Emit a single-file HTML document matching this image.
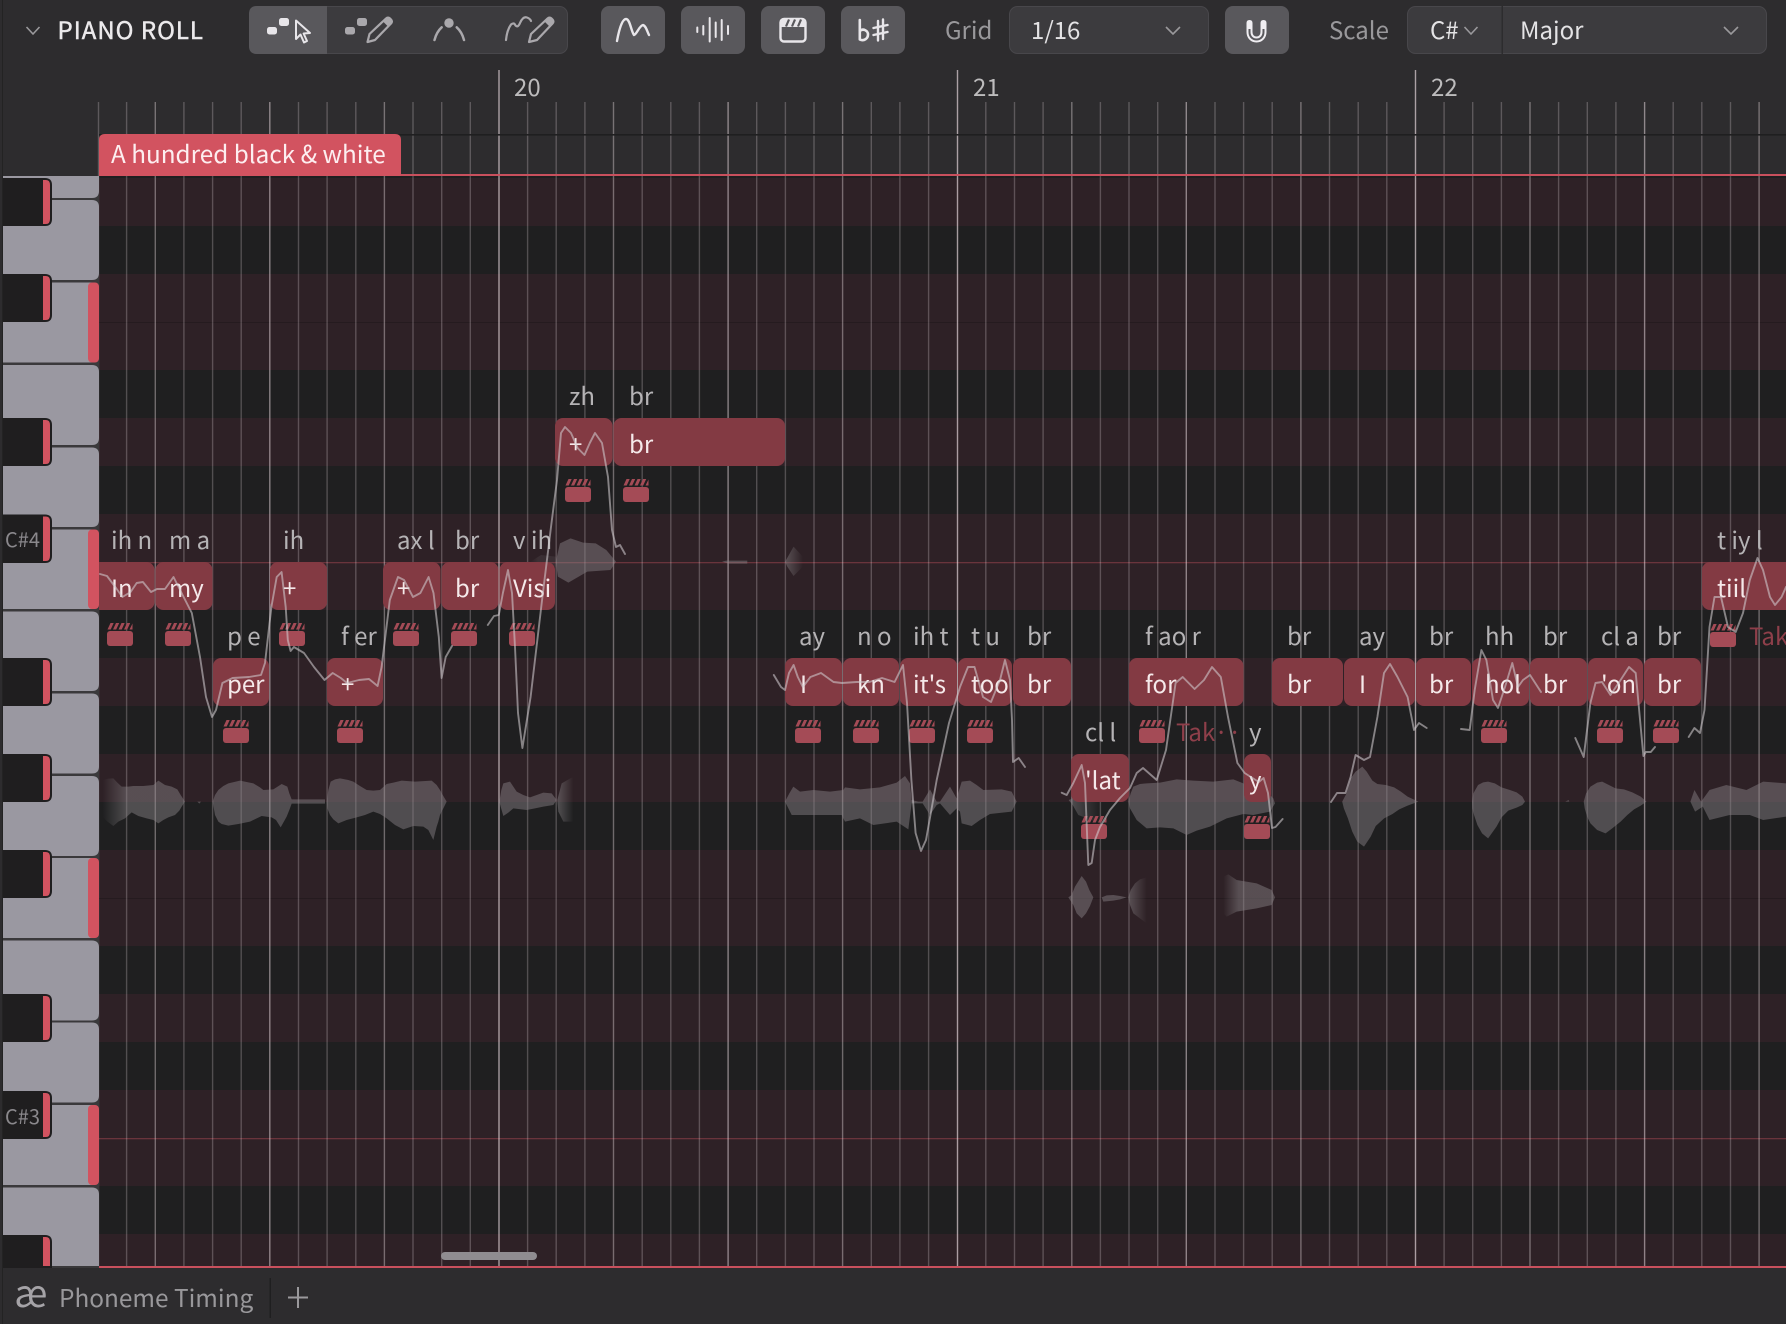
<!DOCTYPE html>
<html lang="en">
<head>
<meta charset="utf-8">
<title>Piano Roll</title>
<style>
html,body{margin:0;padding:0;background:#2d2c2e;width:1786px;height:1324px;overflow:hidden}
svg{display:block;filter:blur(.3px)}
text{font-family:"Noto Sans CJK JP","Liberation Sans",sans-serif;font-size:24px;white-space:pre}
.l{fill:#b5b3b5}
.n{fill:#f5e9ea}
.t{fill:#99989b}
.d{fill:#e4e3e5}
.r{fill:#bdbcbd}
.w{fill:rgba(135,130,133,.47)}
.p{fill:none;stroke:rgba(208,204,206,.58);stroke-width:1.9;stroke-linejoin:round;stroke-linecap:round}
.k{fill:#9a98a1}
.b{fill:#1f1e1f}
.m{fill:#d25360}
.nt{fill:#833a43}
.ic{fill:none;stroke:#aaa8ac;stroke-width:2.2;stroke-linecap:round;stroke-linejoin:round}
.iw{fill:none;stroke:#e8e6ea;stroke-width:2.4;stroke-linecap:round;stroke-linejoin:round}
</style>
</head>
<body>
<svg xmlns="http://www.w3.org/2000/svg" width="1786" height="1324" viewBox="0 0 1786 1324">
<defs>
<g id="c">
<rect x="0" y="8" width="26" height="15" rx="3" fill="#a44b56"/>
<path d="M0.5 6.5 L3.5 0 H6.7 L3.7 6.5Z M6 6.5 L9 0 H12.2 L9.2 6.5Z M11.5 6.5 L14.500 0 H17.7 L14.700 6.5Z M17 6.5 L20 0 H23.2 L20.2 6.5Z M22.5 6.5 L25.500 0.5 V6.5Z" fill="#a44b56"/>
</g>
<linearGradient id="fr" x1="0" x2="1" y1="0" y2="0"><stop offset="0" stop-color="#878285" stop-opacity=".5"/><stop offset="1" stop-color="#878285" stop-opacity="0"/></linearGradient>
<linearGradient id="fl" x1="0" x2="1" y1="0" y2="0"><stop offset="0" stop-color="#878285" stop-opacity="0"/><stop offset=".3" stop-color="#878285" stop-opacity=".47"/><stop offset="1" stop-color="#878285" stop-opacity=".47"/></linearGradient>
<clipPath id="gc"><rect x="99" y="176" width="1687" height="1090"/></clipPath>
</defs>

<!-- base -->
<rect width="1786" height="1324" fill="#2d2c2e"/>
<rect x="2" y="0" width="1" height="1324" fill="#232323"/>

<!-- grid rows -->
<rect x="99" y="176" width="1687" height="1090" fill="#1f1f20"/>
<g fill="#2e2126">
<rect x="99" y="178" width="1687" height="48"/>
<rect x="99" y="274" width="1687" height="96"/>
<rect x="99" y="418" width="1687" height="48"/>
<rect x="99" y="514" width="1687" height="96"/>
<rect x="99" y="658" width="1687" height="48"/>
<rect x="99" y="754" width="1687" height="48"/>
<rect x="99" y="850" width="1687" height="96"/>
<rect x="99" y="994" width="1687" height="48"/>
<rect x="99" y="1090" width="1687" height="96"/>
<rect x="99" y="1234" width="1687" height="32"/>
</g>
<g fill="rgba(0,0,0,.18)">
<rect x="99" y="322" width="1687" height="1"/>
<rect x="99" y="898" width="1687" height="1"/>
</g>
<g fill="rgba(205,85,98,.38)">
<rect x="99" y="562" width="1687" height="1.3"/>
<rect x="99" y="1138" width="1687" height="1.3"/>
</g>

<!-- grid lines -->
<g fill="none" stroke-width="1.4">
<path stroke="rgba(255,240,245,.23)" d="M98.5 102V1266M126.6 102V1266M183.9 102V1266M212.6 102V1266M241.2 102V1266M298.5 102V1266M327.1 102V1266M355.8 102V1266M413 102V1266M441.7 102V1266M470.3 102V1266M527.6 102V1266M556.2 102V1266M584.9 102V1266M642.2 102V1266M670.8 102V1266M699.4 102V1266M756.7 102V1266M785.4 102V1266M814 102V1266M871.3 102V1266M899.9 102V1266M928.6 102V1266M985.8 102V1266M1014.5 102V1266M1043.1 102V1266M1100.4 102V1266M1129 102V1266M1157.7 102V1266M1215 102V1266M1243.6 102V1266M1272.2 102V1266M1329.5 102V1266M1358.2 102V1266M1386.8 102V1266M1444.1 102V1266M1472.7 102V1266M1501.4 102V1266M1558.6 102V1266M1587.3 102V1266M1615.9 102V1266M1673.2 102V1266M1701.8 102V1266M1730.5 102V1266"/>
<path stroke="rgba(255,240,245,.36)" d="M155.3 102V1266M384.4 102V1266M613.5 102V1266M842.6 102V1266M1071.8 102V1266M1300.9 102V1266M1530 102V1266M1759.1 102V1266"/>
<path stroke="rgba(255,240,245,.47)" d="M269.8 102V1266M728.1 102V1266M1186.3 102V1266M1644.6 102V1266"/>
<path stroke="rgba(255,240,245,.6)" d="M499 70V1266M957.5 70V1266M1415.5 70V1266"/>
</g>

<!-- ruler lane -->
<rect x="99" y="134" width="1687" height="1.6" fill="#1f1f20"/>
<text class="r" x="514" y="96">20</text>
<text class="r" x="973" y="96">21</text>
<text class="r" x="1431" y="96">22</text>
<rect x="99" y="174" width="1687" height="2" fill="#c9505d"/>
<path d="M99 176V140q0-6 6-6H395q6 0 6 6V176Z" fill="#d25360"/>
<text x="111" y="163" fill="#fdeef0" style="font-size:24.3px">A hundred black &amp; white</text>

<!-- waveforms -->
<g clip-path="url(#gc)">
<g transform="translate(90 740) scale(.33333)">
<polygon fill="url(#fl)" points="38,120 55,116 70,115 82,128 95,140 115,140 130,138 160,138 190,135 205,122 225,135 245,140 262,148 272,165 285,185 275,200 268,212 255,225 235,232 220,240 205,250 190,240 170,235 145,228 125,217 105,235 85,245 70,258 50,243 38,230"/>
<polygon class="w" points="322,185 333,185 328,191"/>
<polygon class="w" points="368,185 375,165 385,150 400,138 415,130 450,122 490,130 510,142 520,150 550,148 575,132 592,140 598,160 605,178 705,178 705,191 605,191 598,210 590,230 572,262 558,240 545,232 515,228 490,240 480,245 445,252 415,257 395,252 385,245 375,225"/>
<polygon class="w" points="710,185 715,150 722,125 735,118 750,115 775,120 790,125 810,138 830,150 850,152 870,150 890,132 910,128 935,122 975,125 1025,122 1040,135 1050,150 1060,168 1070,185 1060,205 1050,225 1045,245 1040,260 1030,300 1015,270 1000,260 970,258 940,268 915,255 890,235 870,222 850,215 825,225 800,232 770,240 745,250 730,238 720,225 712,205"/>
<polygon class="w" points="1228,185 1234,150 1240,130 1260,125 1270,140 1280,155 1300,165 1320,172 1340,165 1360,158 1385,160 1400,180 1390,195 1360,200 1335,205 1310,210 1270,205 1255,218 1240,228 1232,200"/>
<polygon fill="url(#fr)" points="1402,180 1415,130 1445,113 1450,113 1450,245 1420,245 1405,215"/>
</g>
<g transform="translate(780 740) scale(.33333)">
<polygon class="w" points="15,185 28,160 40,140 60,155 100,150 150,155 190,150 195,142 240,148 300,142 350,128 375,108 390,130 395,180 415,185 428,185 450,148 470,185 480,185 510,140 530,175 545,125 570,122 590,135 610,150 665,148 695,155 710,185 695,215 630,222 600,240 575,258 545,250 540,215 530,205 510,225 480,190 470,195 450,225 428,190 415,190 395,190 385,268 350,245 280,255 240,235 195,245 185,225 130,225 70,225 35,225"/>
<polygon fill="url(#fr)" points="866,180 880,175 960,180 960,250 895,225 878,195"/>
<polygon class="w" points="1045,185 1052,160 1060,140 1080,132 1100,130 1140,128 1190,118 1240,122 1300,125 1360,118 1390,130 1430,150 1470,165 1480,175 1485,190 1470,215 1420,225 1390,222 1340,235 1290,260 1250,272 1220,285 1180,265 1140,262 1100,265 1070,240 1050,205"/>
<polygon class="w" points="865,472 875,465 885,440 905,408 918,425 928,450 940,472 930,498 918,520 905,535 890,520 880,495"/>
<polygon class="w" points="965,472 980,466 1000,465 1020,468 1040,472 1020,478 1000,482 970,485"/>
<polygon fill="url(#fr)" points="1045,472 1052,450 1065,430 1080,418 1100,412 1100,550 1080,535 1060,520 1050,495"/>
<polygon fill="url(#fl)" points="1330,410 1345,403 1370,420 1430,430 1475,450 1485,472 1475,495 1430,505 1370,515 1340,530 1330,520"/>
</g>
<g transform="translate(1260 540) scale(.33546 .33333)">
<polygon class="w" points="245,785 258,760 270,715 285,695 305,680 318,695 335,722 350,732 375,735 400,742 420,755 440,770 472,785 440,797 415,808 395,822 370,835 345,858 330,890 310,920 290,905 275,875 262,835 250,805"/>
<polygon class="w" points="632,785 636,760 650,735 665,727 680,725 700,730 720,742 745,750 765,757 782,770 790,785 782,795 765,803 740,812 720,832 705,860 680,895 662,880 648,855 638,825 633,805"/>
<polygon class="w" points="910,785 920,780 922,785"/>
<polygon class="w" points="965,785 972,760 985,740 1005,728 1020,725 1040,735 1060,745 1085,748 1110,757 1135,770 1152,785 1135,797 1115,808 1095,825 1075,845 1050,865 1030,880 1005,870 985,850 975,830 968,805"/>
<polygon class="w" points="1283,785 1295,750 1315,785 1340,750 1390,735 1450,750 1500,725 1568,730 1568,830 1500,840 1460,825 1400,825 1340,840 1320,800 1297,815"/>
</g>
<g transform="translate(520 380) scale(.42088 .33333)">
<polygon class="w" points="85,545 95,490 120,475 150,488 180,490 205,510 228,545 215,570 160,575 115,608 90,590"/>
<polygon class="w" points="480,545 490,542 540,542 540,551 495,551"/>
<polygon fill="url(#fr)" points="630,545 650,500 672,530 672,560 650,588 635,560"/>
<polygon fill="url(#fl)" opacity=".3" points="25,545 50,525 85,530 85,560 50,565"/>
</g>
</g>

<!-- notes -->
<g class="nt">
<rect x="555" y="418" width="57.5" height="48" rx="8"/>
<rect x="613.5" y="418" width="171.5" height="48" rx="8"/>
<rect x="92" y="562" width="62.5" height="48" rx="8"/>
<rect x="155.5" y="562" width="57" height="48" rx="8"/>
<rect x="270" y="562" width="57" height="48" rx="8"/>
<rect x="383" y="562" width="57.5" height="48" rx="8"/>
<rect x="441.5" y="562" width="57" height="48" rx="8"/>
<rect x="499.5" y="562" width="55.5" height="48" rx="8"/>
<rect x="1702" y="562" width="100" height="48" rx="8"/>
<rect x="213" y="658" width="56" height="48" rx="8"/>
<rect x="327" y="658" width="56" height="48" rx="8"/>
<rect x="785" y="658" width="57" height="48" rx="8"/>
<rect x="843" y="658" width="56" height="48" rx="8"/>
<rect x="900" y="658" width="57" height="48" rx="8"/>
<rect x="958" y="658" width="54" height="48" rx="8"/>
<rect x="1013" y="658" width="58" height="48" rx="8"/>
<rect x="1129" y="658" width="114.5" height="48" rx="8"/>
<rect x="1272" y="658" width="71" height="48" rx="8"/>
<rect x="1344" y="658" width="71" height="48" rx="8"/>
<rect x="1416" y="658" width="55" height="48" rx="8"/>
<rect x="1472" y="658" width="57" height="48" rx="8"/>
<rect x="1530" y="658" width="57" height="48" rx="8"/>
<rect x="1588" y="658" width="55" height="48" rx="8"/>
<rect x="1644" y="658" width="57" height="48" rx="8"/>
<rect x="1071" y="754" width="58" height="48" rx="8"/>
<rect x="1244" y="754" width="27" height="48" rx="8"/>
</g>

<!-- take icons -->
<g>
<use href="#c" x="565" y="479"/><use href="#c" x="623" y="479"/>
<use href="#c" x="107" y="623"/><use href="#c" x="165" y="623"/><use href="#c" x="279" y="623"/><use href="#c" x="393" y="623"/><use href="#c" x="451" y="623"/><use href="#c" x="509" y="623"/>
<use href="#c" x="223" y="720"/><use href="#c" x="337" y="720"/><use href="#c" x="795" y="720"/><use href="#c" x="853" y="720"/><use href="#c" x="909" y="720"/><use href="#c" x="967" y="720"/><use href="#c" x="1139" y="720"/><use href="#c" x="1481" y="720"/><use href="#c" x="1597" y="720"/><use href="#c" x="1653" y="720"/>
<use href="#c" x="1081" y="816"/><use href="#c" x="1244" y="816"/>
<use href="#c" x="1710" y="624"/>
</g>
<text x="1176" y="741" fill="#8e3f4a">Tak··</text>
<text x="1749" y="645" fill="#8e3f4a">Take</text>

<!-- labels -->
<g>
<text class="l" x="569" y="405">zh</text>
<text class="l" x="629" y="405">br</text>
<text class="l" x="111" y="549">ih n</text>
<text class="l" x="169" y="549">m a</text>
<text class="l" x="283" y="549">ih</text>
<text class="l" x="397" y="549">ax l</text>
<text class="l" x="455" y="549">br</text>
<text class="l" x="513" y="549">v ih</text>
<text class="l" x="1717" y="549">t iy l</text>
<text class="l" x="227" y="645">p e</text>
<text class="l" x="341" y="645">f er</text>
<text class="l" x="799" y="645">ay</text>
<text class="l" x="857" y="645">n o</text>
<text class="l" x="913" y="645">ih t</text>
<text class="l" x="971" y="645">t u</text>
<text class="l" x="1027" y="645">br</text>
<text class="l" x="1145" y="645">f ao r</text>
<text class="l" x="1287" y="645">br</text>
<text class="l" x="1359" y="645">ay</text>
<text class="l" x="1429" y="645">br</text>
<text class="l" x="1485" y="645">hh</text>
<text class="l" x="1543" y="645">br</text>
<text class="l" x="1601" y="645">cl a</text>
<text class="l" x="1657" y="645">br</text>
<text class="l" x="1085" y="741">cl l</text>
<text class="l" x="1249" y="741">y</text>
</g>
<g>
<text class="n" x="569" y="453">+</text>
<text class="n" x="629" y="453">br</text>
<text class="n" x="111" y="597">In</text>
<text class="n" x="169" y="597">my</text>
<text class="n" x="283" y="597">+</text>
<text class="n" x="397" y="597">+</text>
<text class="n" x="455" y="597">br</text>
<text class="n" x="513" y="597">Visi</text>
<text class="n" x="1717" y="597">tiil</text>
<text class="n" x="227" y="693">per</text>
<text class="n" x="341" y="693">+</text>
<text class="n" x="800" y="693">I</text>
<text class="n" x="857" y="693">kn</text>
<text class="n" x="913" y="693">it's</text>
<text class="n" x="971" y="693">too</text>
<text class="n" x="1027" y="693">br</text>
<text class="n" x="1145" y="693">for</text>
<text class="n" x="1287" y="693">br</text>
<text class="n" x="1359" y="693">I</text>
<text class="n" x="1429" y="693">br</text>
<text class="n" x="1485" y="693">hol</text>
<text class="n" x="1543" y="693">br</text>
<text class="n" x="1601" y="693">'on</text>
<text class="n" x="1657" y="693">br</text>
<text class="n" x="1085" y="789">'lat</text>
<text class="n" x="1249" y="789">y</text>
</g>

<!-- pitch curves -->
<g clip-path="url(#gc)">
<polyline class="p" points="100,574 107,576 116,588 122.4,597 130.6,592 136.7,583 142.9,582 151,592 157,589 165,589 173.5,577 181.6,593 191.8,613 200,657 206,697 212,717 216,710 222.4,683 232.6,678 249,677 261,675 265,663 271.4,607 276.7,577 281.6,572 285.7,607 287.8,640 290.6,651 293.9,647 304,653 314,667 324.5,680 332.7,673 340.8,678 347,683 359,680 369,679 377.6,686 381.6,667 389.8,600 398,577 404,580 413,597 420.4,593 428.6,577 433.5,593 438.8,637 441.6,678 445.7,657 452,646"/>
<polyline class="p" points="487.8,625 494,616 498.8,615 502.9,593 508,570 512,593 515,647 518,713 522.4,748 530.6,697 542.9,593 551,527 557,480 561,433 565,427 571,433 577.6,448 584.5,455 589.8,443 595,433 602,443 608,477 612,530 616,547 620,545 625,554"/>
<polyline class="p" points="773.8,675 781,687 785,690 789,673 793.6,665 797.8,677 802.8,687 810.4,677 821,673 833.5,682 842,683 856.7,682 869.3,682 882,678 894.6,682 903,665 907,703 911.4,780 915.6,833 921,851 926,840 936.7,780 949,723 960,687 968,667 974.5,667 983,697 991,702 1000,680 1005,660 1010,680 1012,720 1013,762 1018.7,758 1025,767"/>
<polyline class="p" points="1061.7,792.7 1066.7,795 1073.3,783 1081.7,765 1085,783 1088.3,865 1091.7,863 1095,840 1100,827 1110,810 1120,798 1130,788 1136.7,773 1143,768 1156.7,780 1166,750 1175.6,683 1182.7,677 1194.6,689 1204,680 1212,667 1220.8,677 1228,717 1237.4,763 1244.6,773 1258.8,782 1263.6,778 1268,793 1272,828 1275.5,827 1282.6,819"/>
<polyline class="p" points="1331,802 1337,793 1345.5,793 1350.6,777 1355.6,755 1364,760 1370,757 1377.4,717 1384,673 1390,664 1397.5,677 1407.6,697 1414,730 1419,723 1426.7,728"/>
<polyline class="p" points="1461,729 1469.7,730 1474.7,690 1481.4,650 1486.4,660 1493,700 1498,708 1505,687 1512.3,663 1518,687 1523,680 1530,675 1541,692"/>
<polyline class="p" points="1575.3,738 1583.7,757 1590.4,703 1595.5,683 1602,682 1610.5,695 1620.6,680 1629,667 1635.7,673 1640.7,727 1643.4,756 1645.8,752 1650.8,752 1655,747"/>
<polyline class="p" points="1688.7,737 1694.4,728 1700,733 1704.5,710 1709.5,627 1714.5,597 1721,597 1728,627 1735.7,632 1743,613 1749.8,580 1757.5,558 1763,570 1770,597 1775,605 1781.6,597 1786,587"/>
</g>

<!-- scrollbar + bottom red line -->
<rect x="441" y="1252" width="96" height="8" rx="4" fill="#8f8c90"/>
<rect x="99" y="1266" width="1687" height="2" fill="#c9505d"/>

<!-- piano -->
<rect x="3" y="176" width="96" height="1092" fill="#3a393b"/>
<g class="k">
<path d="M3 176H99V191q0 7-7 7H3Z"/>
<rect x="3" y="200" width="96" height="80"/>
<rect x="3" y="282.5" width="96" height="80"/>
<rect x="3" y="365" width="96" height="80"/>
<rect x="3" y="447.5" width="96" height="79.5"/>
<rect x="3" y="529.5" width="96" height="79.5"/>
<rect x="3" y="611.5" width="96" height="79.5"/>
<rect x="3" y="693.5" width="96" height="80"/>
<rect x="3" y="776" width="96" height="80"/>
<rect x="3" y="858" width="96" height="80"/>
<rect x="3" y="940.5" width="96" height="80"/>
<rect x="3" y="1022.5" width="96" height="80"/>
<rect x="3" y="1105" width="96" height="80"/>
<path d="M3 1187.5H92q7 0 7 7V1266H3Z"/>
</g>
<!-- rounded right corners of white keys -->
<g fill="#3a393b">
<path d="M99 200H92q7 0 7 7ZM99 280H92q7 0 7-7ZM99 282.5H92q7 0 7 7ZM99 362.5H92q7 0 7-7ZM99 365H92q7 0 7 7ZM99 445H92q7 0 7-7ZM99 447.5H92q7 0 7 7ZM99 527H92q7 0 7-7ZM99 529.5H92q7 0 7 7ZM99 609H92q7 0 7-7ZM99 611.5H92q7 0 7 7ZM99 691H92q7 0 7-7ZM99 693.5H92q7 0 7 7ZM99 773.5H92q7 0 7-7ZM99 776H92q7 0 7 7ZM99 856H92q7 0 7-7ZM99 858H92q7 0 7 7ZM99 938H92q7 0 7-7ZM99 940.5H92q7 0 7 7ZM99 1020.5H92q7 0 7-7ZM99 1022.5H92q7 0 7 7ZM99 1102.5H92q7 0 7-7ZM99 1105H92q7 0 7 7ZM99 1185H92q7 0 7-7Z"/>
</g>
<!-- white key scale markers -->
<g class="m">
<rect x="88" y="282.5" width="11" height="80" rx="4"/>
<rect x="88" y="529.5" width="11" height="79.5" rx="4"/>
<rect x="88" y="858" width="11" height="80" rx="4"/>
<rect x="88" y="1105" width="11" height="80" rx="4"/>
</g>
<!-- black keys -->
<g class="b">
<path d="M3 178H45q7 0 7 7V219q0 7-7 7H3Z"/>
<path d="M3 274H45q7 0 7 7V315q0 7-7 7H3Z"/>
<path d="M3 418H45q7 0 7 7V459q0 7-7 7H3Z"/>
<path d="M3 514.5H45q7 0 7 7V556q0 7-7 7H3Z"/>
<path d="M3 658H45q7 0 7 7V699q0 7-7 7H3Z"/>
<path d="M3 754H45q7 0 7 7V795q0 7-7 7H3Z"/>
<path d="M3 850H45q7 0 7 7V891q0 7-7 7H3Z"/>
<path d="M3 994H45q7 0 7 7V1035q0 7-7 7H3Z"/>
<path d="M3 1091H45q7 0 7 7V1132q0 7-7 7H3Z"/>
<path d="M3 1235H45q7 0 7 7V1268H3Z"/>
</g>
<g class="m">
<path d="M43 180H46q4 0 4 5V219q0 5-4 5H43Z"/>
<path d="M43 276H46q4 0 4 5V315q0 5-4 5H43Z"/>
<path d="M43 420H46q4 0 4 5V459q0 5-4 5H43Z"/>
<path d="M43 516.5H46q4 0 4 5V556q0 5-4 5H43Z"/>
<path d="M43 660H46q4 0 4 5V699q0 5-4 5H43Z"/>
<path d="M43 756H46q4 0 4 5V795q0 5-4 5H43Z"/>
<path d="M43 852H46q4 0 4 5V891q0 5-4 5H43Z"/>
<path d="M43 996H46q4 0 4 5V1035q0 5-4 5H43Z"/>
<path d="M43 1093H46q4 0 4 5V1132q0 5-4 5H43Z"/>
<path d="M43 1237H46q4 0 4 5V1266H43Z"/>
</g>
<text x="5" y="547" fill="#8a888c" style="font-size:20px">C#4</text>
<text x="5" y="1124" fill="#8a888c" style="font-size:20px">C#3</text>

<!-- toolbar -->
<polyline points="26.5,27 33,34 39.5,27" fill="none" stroke="#9a999c" stroke-width="1.6"/>
<text x="57.5" y="39" fill="#eceaec" stroke="#eceaec" stroke-width=".45" style="letter-spacing:1px">PIANO ROLL</text>

<rect x="249.5" y="6.5" width="318" height="47" rx="8" fill="#3c3b3e" stroke="#48474b"/>
<path d="M257 6H327V54H257q-8 0-8-8V14q0-8 8-8Z" fill="#59585c"/>
<!-- tool 1 -->
<rect x="267" y="27" width="10" height="7.5" rx="2.5" fill="#e8e6ea"/>
<rect x="279" y="18" width="10" height="8" rx="2.5" fill="#e8e6ea"/>
<path d="M296 20.5V39L300.5 34.5 304 42.5 307 41 303.6 33.5 310 33Z" fill="none" stroke="#e8e6ea" stroke-width="2" stroke-linejoin="round"/>
<!-- tool 2 -->
<rect x="345" y="27" width="10" height="7.5" rx="2.5" fill="#aaa8ac"/>
<rect x="357" y="18" width="10" height="8" rx="2.5" fill="#aaa8ac"/>
<path class="ic" d="M367.5 42l2-8L386 18.5q2-1.8 4 0l1 1q1.8 2 0 4L375 40Z"/>
<path d="M383 21.5L386 18.5q2-1.8 4 0l1 1q1.8 2 0 4L388 26.5Z" fill="#aaa8ac"/>
<!-- tool 3 -->
<circle cx="449" cy="23" r="4.7" fill="#aaa8ac"/>
<path class="ic" style="stroke-width:2.5" d="M434.5 40Q436.5 32 441.7 27.3M456.7 27.3Q462 32 464 40"/>
<!-- tool 4 -->
<path class="ic" d="M506 40Q507 30 511 24.5 514 22 515.5 25.5 518 28 520 23 523 16 527 17.5 530 18.5 531 21"/>
<path class="ic" d="M529 42l2-8L547.5 18.5q2-1.8 4 0l1 1q1.8 2 0 4L537 40Z"/>
<path d="M544.5 21.5L547.5 18.5q2-1.8 4 0l1 1q1.8 2 0 4L549.5 26.5Z" fill="#aaa8ac"/>

<!-- toggle buttons -->
<rect x="601" y="6" width="64" height="48" rx="8" fill="#59585c"/>
<rect x="681" y="6" width="64" height="48" rx="8" fill="#59585c"/>
<rect x="761" y="6" width="64" height="48" rx="8" fill="#59585c"/>
<rect x="841" y="6" width="64" height="48" rx="8" fill="#59585c"/>
<path class="iw" d="M617 41C619 30 622 19 626 19 630 19 631 31 634 35 637 34 639 26 643 25 646 26 647 31 649 35"/>
<path class="iw" style="stroke-width:2" d="M697.3 27.5V32M703.3 26V34.5M709.7 18V41.5M715.7 22.5V37M721.7 20V40M728 26V34"/>
<rect x="780.5" y="19" width="25" height="22.5" rx="3.5" fill="none" stroke="#e8e6ea" stroke-width="2.4"/>
<path d="M781 19H805V27H781Z" fill="#e8e6ea"/>
<path d="M786 26.5L789 19.5M792 26.5L795 19.5M798 26.5L801 19.5" stroke="#59585c" stroke-width="2.2" fill="none"/>
<path class="iw" style="stroke-width:2.6" d="M859.8 20V39.5C864 41.5 868 38.5 868 34.5 868 30.5 863 28 859.8 31"/>
<path class="iw" style="stroke-width:2.4" d="M878 21V40.5M883 19.5V39M873.5 28L887.5 25M873.5 35L887.5 32"/>

<!-- grid dropdown -->
<text class="t" x="945" y="39">Grid</text>
<rect x="1009.5" y="6.5" width="199" height="47" rx="8" fill="#3c3b3e" stroke="#48474b"/>
<text class="d" x="1031" y="39">1/16</text>
<polyline points="1166,27 1173,34 1180,27" fill="none" stroke="#9a999c" stroke-width="1.6"/>

<!-- magnet -->
<rect x="1225" y="6" width="64" height="48" rx="8" fill="#59585c"/>
<path d="M1249.5 23V32C1249.5 36.5 1252.5 39.5 1256.5 39.5 1260.5 39.5 1263.5 36.5 1263.5 32V23" fill="none" stroke="#f0eef2" stroke-width="6"/>
<path d="M1246.5 23Q1246.5 20 1249.5 20 1252.5 20 1252.5 23ZM1260.5 23Q1260.5 20 1263.5 20 1266.5 20 1266.5 23Z" fill="#f0eef2"/>
<path d="M1249.5 29V32C1249.5 36.5 1252.5 39.5 1256.5 39.5 1260.5 39.5 1263.5 36.5 1263.5 32V29" fill="none" stroke="#59585c" stroke-width="2"/>

<!-- scale -->
<text class="t" x="1329" y="39">Scale</text>
<rect x="1407.5" y="6.5" width="359" height="47" rx="8" fill="#3c3b3e" stroke="#48474b"/>
<rect x="1501.5" y="6" width="1.5" height="48" fill="#2d2c2e"/>
<text class="d" x="1430" y="39">C#</text>
<polyline points="1464.5,27 1471,34 1477.5,27" fill="none" stroke="#9a999c" stroke-width="1.6"/>
<text class="d" x="1520" y="39">Major</text>
<polyline points="1724,27 1731,34 1738,27" fill="none" stroke="#9a999c" stroke-width="1.6"/>

<!-- bottom bar -->
<text x="14" y="1307" fill="#a5a3a7" style="font-size:38px">æ</text>
<text class="t" x="59" y="1307" style="font-size:24.4px">Phoneme Timing</text>
<rect x="269.5" y="1278" width="1.5" height="40" fill="#1f1f20"/>
<path d="M288 1297.5H308M298 1287V1308" stroke="#9a999c" stroke-width="2" fill="none"/>
</svg>
</body>
</html>
